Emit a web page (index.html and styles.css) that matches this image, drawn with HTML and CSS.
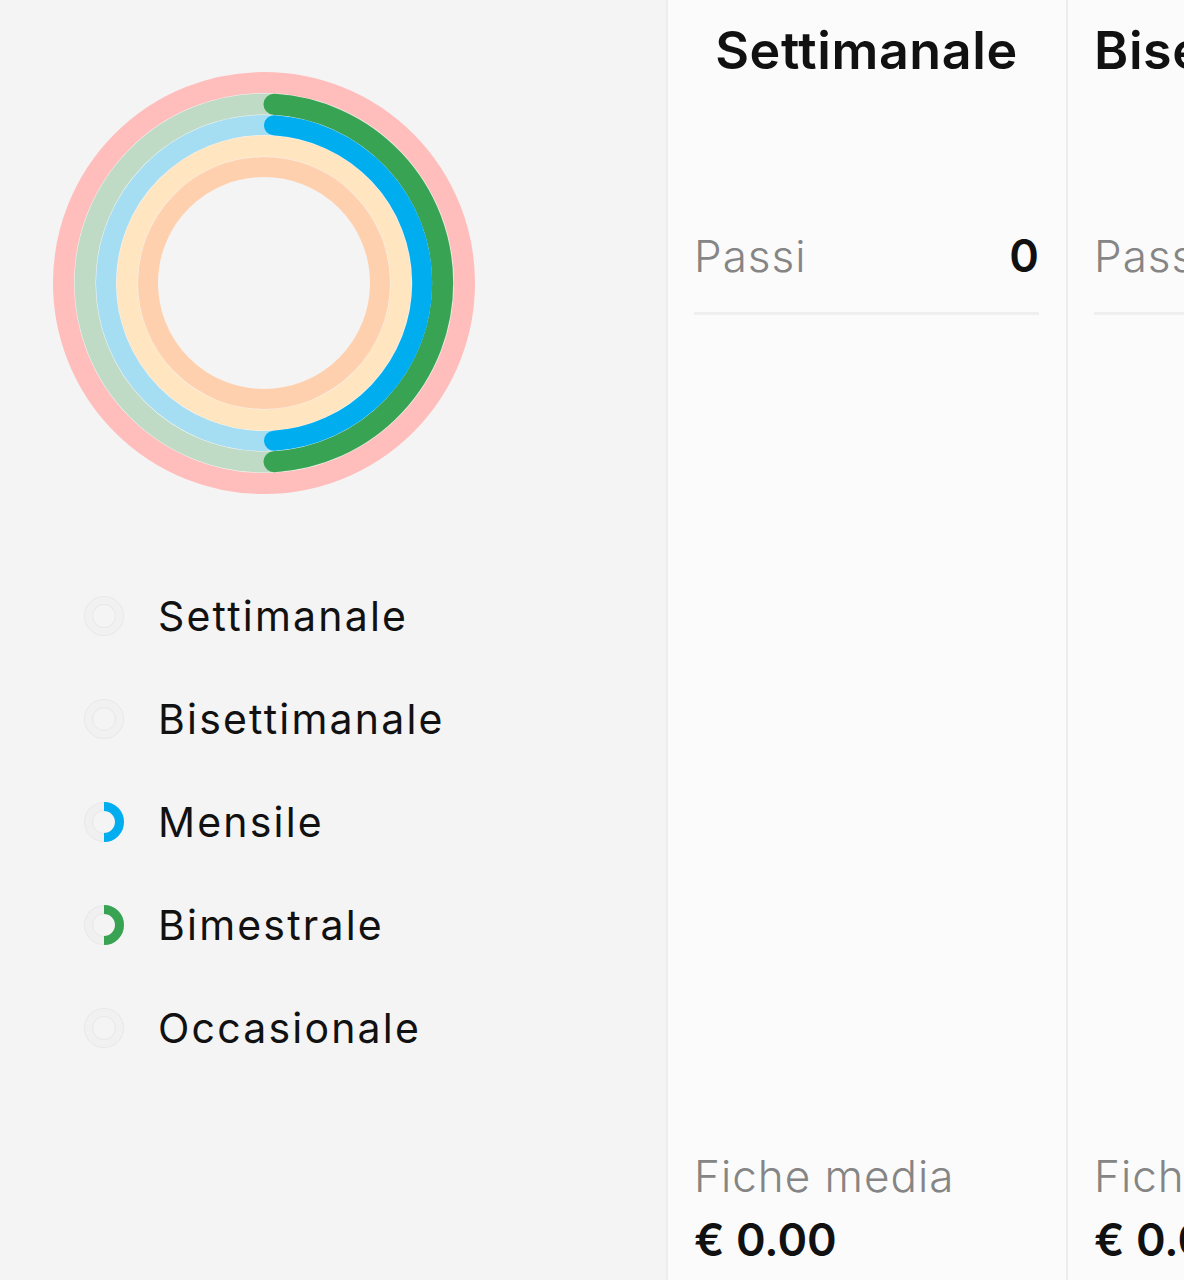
FILE: index.html
```html
<!DOCTYPE html>
<html lang="it">
<head>
  <meta charset="UTF-8" />
  <title>Obiettivi</title>
  <link rel="stylesheet" href="styles.css">
</head>
<body>

<div class="page">
  <aside class="summary">
    <svg class="rings" width="422" height="422" viewBox="0 0 422 422">
      <circle cx="211" cy="211" r="200.5" fill="none" stroke="#ffbdbb" stroke-width="21" />
      <circle cx="211" cy="211" r="179" fill="none" stroke="#c0dbc5" stroke-width="21" />
      <circle cx="211" cy="211" r="158" fill="none" stroke="#a5ddf3" stroke-width="20" />
      <circle cx="211" cy="211" r="137" fill="none" stroke="#ffe6c0" stroke-width="21" />
      <circle cx="211" cy="211" r="116" fill="none" stroke="#ffd0ae" stroke-width="20" />
      <path d="M221 32.3 A179 179 0 0 1 221 389.7" fill="none" stroke="#37a353" stroke-width="21" stroke-linecap="round" />
      <path d="M221 53.3 A158 158 0 0 1 221 368.7" fill="none" stroke="#00adef" stroke-width="20" stroke-linecap="round" />
    </svg>

    <ul class="legend">
      <li>
        <svg class="mini" width="40" height="40" viewBox="0 0 40 40">
          <circle cx="20" cy="20" r="15.5" fill="none" stroke="#f1f1f1" stroke-width="9" />
          <circle cx="20" cy="20" r="19.5" fill="none" stroke="#e8e8e8" stroke-width="1" />
          <circle cx="20" cy="20" r="11.5" fill="none" stroke="#e8e8e8" stroke-width="1" />
        </svg>
        <span>Settimanale</span>
      </li>
      <li>
        <svg class="mini" width="40" height="40" viewBox="0 0 40 40">
          <circle cx="20" cy="20" r="15.5" fill="none" stroke="#f1f1f1" stroke-width="9" />
          <circle cx="20" cy="20" r="19.5" fill="none" stroke="#e8e8e8" stroke-width="1" />
          <circle cx="20" cy="20" r="11.5" fill="none" stroke="#e8e8e8" stroke-width="1" />
        </svg>
        <span>Bisettimanale</span>
      </li>
      <li>
        <svg class="mini" width="40" height="40" viewBox="0 0 40 40">
          <circle cx="20" cy="20" r="15.5" fill="none" stroke="#f0f0f0" stroke-width="9" />
          <circle cx="20" cy="20" r="19.5" fill="none" stroke="#e8e8e8" stroke-width="1" />
          <circle cx="20" cy="20" r="11.5" fill="none" stroke="#e8e8e8" stroke-width="1" />
          <path d="M20 4.5 A15.5 15.5 0 0 1 20 35.5" fill="none" stroke="#00adef" stroke-width="9" />
        </svg>
        <span>Mensile</span>
      </li>
      <li>
        <svg class="mini" width="40" height="40" viewBox="0 0 40 40">
          <circle cx="20" cy="20" r="15.5" fill="none" stroke="#f0f0f0" stroke-width="9" />
          <circle cx="20" cy="20" r="19.5" fill="none" stroke="#e8e8e8" stroke-width="1" />
          <circle cx="20" cy="20" r="11.5" fill="none" stroke="#e8e8e8" stroke-width="1" />
          <path d="M20 4.5 A15.5 15.5 0 0 1 20 35.5" fill="none" stroke="#37a353" stroke-width="9" />
        </svg>
        <span>Bimestrale</span>
      </li>
      <li>
        <svg class="mini" width="40" height="40" viewBox="0 0 40 40">
          <circle cx="20" cy="20" r="15.5" fill="none" stroke="#f1f1f1" stroke-width="9" />
          <circle cx="20" cy="20" r="19.5" fill="none" stroke="#e8e8e8" stroke-width="1" />
          <circle cx="20" cy="20" r="11.5" fill="none" stroke="#e8e8e8" stroke-width="1" />
        </svg>
        <span>Occasionale</span>
      </li>
    </ul>
  </aside>

  <section class="card">
    <h2>Settimanale</h2>
    <div class="row">
      <span class="label">Passi</span>
      <span class="value">0</span>
    </div>
    <div class="foot">
      <div class="label">Fiche media</div>
      <div class="amount">€ 0.00</div>
    </div>
  </section>

  <section class="card">
    <h2>Bisettimanale</h2>
    <div class="row">
      <span class="label">Passi</span>
      <span class="value">0</span>
    </div>
    <div class="foot">
      <div class="label">Fiche media</div>
      <div class="amount">€ 0.00</div>
    </div>
  </section>
</div>

</body>
</html>
```

FILE: styles.css
```css
body {
  margin: 0;
  font-family: Inter, "Noto Sans", sans-serif;
  background: #f4f4f4;
  color: #111;
  overflow: hidden;
}
.page {
  display: flex;
  height: 1280px;
}
.summary {
  width: 666px;
  flex-shrink: 0;
  padding-top: 72px;
  box-sizing: border-box;
}
.rings {
  display: block;
  margin-left: 53px;
}
.legend {
  list-style: none;
  margin: 70px 0 0;
  padding: 0 0 0 84px;
}
.legend li {
  display: flex;
  align-items: center;
  gap: 34px;
  height: 103px;
}
.legend span {
  font-size: 41px;
  letter-spacing: 2.2px;
}
.mini {
  display: block;
  flex-shrink: 0;
}
.card {
  width: 400px;
  flex-shrink: 0;
  box-sizing: border-box;
  background: #fbfbfb;
  border-left: 2px solid #ededed;
  padding: 0 27px 13px 26px;
  display: flex;
  flex-direction: column;
}
.card h2 {
  margin: 22px 0 0;
  font-size: 52px;
  font-weight: 600;
  letter-spacing: 0.6px;
  text-align: center;
  white-space: nowrap;
  line-height: 58px;
}
.row {
  display: flex;
  justify-content: space-between;
  align-items: center;
  margin-top: 149px;
  padding-bottom: 29px;
  border-bottom: 3px solid #efefef;
}
.label {
  font-size: 44px;
  line-height: 54px;
  font-weight: 300;
  color: #858585;
  letter-spacing: 1px;
}
.value {
  font-size: 45px;
  line-height: 54px;
  font-weight: 600;
}
.foot {
  margin-top: auto;
}
.amount {
  font-size: 45px;
  line-height: 54px;
  font-weight: 600;
  margin-top: 10px;
}
```
